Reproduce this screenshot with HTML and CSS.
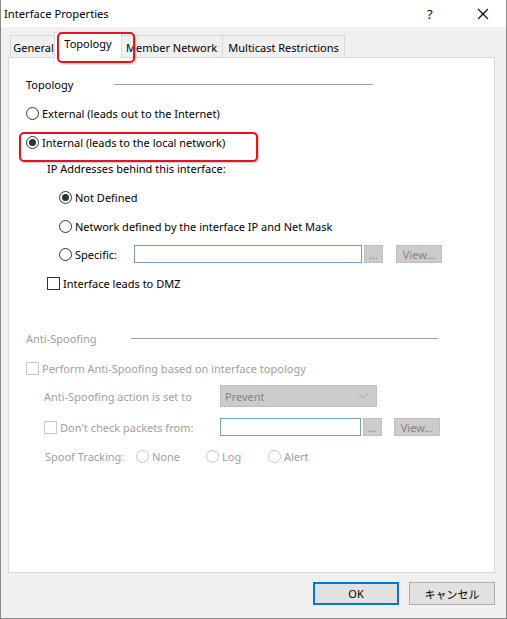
FILE: index.html
```html
<!DOCTYPE html>
<html>
<head>
<meta charset="utf-8">
<link rel="stylesheet" href="styles.css">
</head>
<body>
<div class="window">
  <div class="titlebar">
    <span class="title">Interface Properties</span>
    <span class="help">?</span>
    <svg class="close" width="12" height="12" viewBox="0 0 12 12"><path d="M1 1 L11 11 M11 1 L1 11" stroke="#000" stroke-width="1.1" fill="none"/></svg>
  </div>
  <div class="body">
    <div class="tabs">
      <div class="tab t-general">General</div>
      <div class="tab selected t-topology">Topology</div>
      <div class="tab t-member">Member Network</div>
      <div class="tab t-multi">Multicast Restrictions</div>
      <div class="hl hl-tab"></div>
    </div>
    <div class="panel">
      <div class="group r-topo"><span class="glabel">Topology</span><span class="gline gl-topo"></span></div>
      <div class="row r-ext"><span class="radio"></span><span>External (leads out to the Internet)</span></div>
      <div class="row r-int"><span class="radio checked"></span><span>Internal (leads to the local network)</span></div>
      <div class="row r-ip ind1"><span>IP Addresses behind this interface:</span></div>
      <div class="row r-nd ind2"><span class="radio checked"></span><span>Not Defined</span></div>
      <div class="row r-net ind2"><span class="radio"></span><span>Network defined by the interface IP and Net Mask</span></div>
      <div class="row r-spec ind2"><span class="radio"></span><span class="lbl-spec">Specific:</span><span class="input in-spec"></span><span class="btn-dots">...</span><span class="btn-view">View...</span></div>
      <div class="row r-dmz ind1"><span class="check"></span><span>Interface leads to DMZ</span></div>

      <div class="group r-anti dis"><span class="glabel">Anti-Spoofing</span><span class="gline gl-anti"></span></div>
      <div class="row r-perf dis"><span class="check dis"></span><span>Perform Anti-Spoofing based on interface topology</span></div>
      <div class="row r-act dis ind3"><span class="lbl-act">Anti-Spoofing action is set to</span><span class="select">Prevent<svg class="chev" width="10" height="6" viewBox="0 0 10 6"><path d="M0.5 0.5 L5 5 L9.5 0.5" stroke="#a8a8a8" fill="none"/></svg></span></div>
      <div class="row r-dont dis ind3"><span class="check dis"></span><span class="lbl-dont">Don't check packets from:</span><span class="input in-dont"></span><span class="btn-dots">...</span><span class="btn-view v2">View...</span></div>
      <div class="row r-spoof dis ind4"><span class="lbl-spoof">Spoof Tracking:</span><span class="radio dis"></span><span class="o-none">None</span><span class="radio dis"></span><span class="o-log">Log</span><span class="radio dis"></span><span>Alert</span></div>
      <div class="hl hl-int"></div>
    </div>
    <div class="buttons">
      <button class="btn ok">OK</button>
      <button class="btn">キャンセル</button>
    </div>
  </div>
</div>
</body>
</html>
```
FILE: styles.css
```css
html, body { margin: 0; padding: 0; }
body {
  font-family: "Noto Sans", "Noto Sans CJK JP", sans-serif;
  font-size: 11px;
  color: #000;
  background: #fff;
}
.window {
  width: 505px;
  height: 618px;
  border: 1px solid #8a8a8a;
  border-top: none;
  background: #f0f0f0;
  display: flex;
  flex-direction: column;
}
.titlebar {
  height: 27px;
  background: #fff;
  display: flex;
  align-items: center;
  padding-left: 3px;
  position: relative;
}
.title { flex: 1; font-size: 11.2px; }
.help { width: 16px; margin-right: 34px; font-size: 13px; }
.close { margin-right: 17px; }
.body { flex: 1; display: flex; flex-direction: column; }
.tabs {
  display: flex;
  align-items: flex-end;
  height: 30px;
  margin-left: 9px;
  position: relative;
}
.tab {
  height: 22px;
  border: 1px solid #d9d9d9;
  border-bottom: none;
  border-right: none;
  display: flex;
  align-items: center;
  justify-content: center;
  background: #f0f0f0;
  box-sizing: border-box;
  padding-top: 1px;
}
.t-general { width: 46px; }
.t-topology { width: 68px; }
.t-member { width: 101px; }
.t-multi { width: 123px; border-right: 1px solid #d9d9d9; }
.tab.selected {
  background: #fff;
  height: 26px;
  margin-left: -2px;
  margin-right: -1px;
  margin-bottom: -1px;
  border-right: 1px solid #d9d9d9;
  align-items: flex-start;
  padding-top: 3px;
  position: relative;
  z-index: 2;
}
.tab.selected + .tab { border-left: none; }
.panel {
  margin-left: 7px;
  width: 485px;
  height: 514px;
  background: #fff;
  border: 1px solid #d9d9d9;
  position: relative;
  display: flex;
  flex-direction: column;
}
.row, .group {
  height: 20px;
  display: flex;
  align-items: center;
  padding-left: 17px;
  flex-shrink: 0;
}
.glabel { white-space: nowrap; }
.gline { height: 1px; background: #a0a0a0; }
.gl-topo { margin-left: 41px; width: 259px; }
.gl-anti { margin-left: 35px; width: 307px; }
.ind1 { padding-left: 38px; }
.ind2 { padding-left: 50px; }
.ind3 { padding-left: 35px; }
.ind4 { padding-left: 36px; }
.r-topo { margin-top: 16px; }
.r-ext { margin-top: 9px; }
.r-int { margin-top: 9px; }
.r-ip { margin-top: 6px; }
.r-nd { margin-top: 9px; }
.r-net { margin-top: 9px; }
.r-spec { margin-top: 8px; }
.r-dmz { margin-top: 9px; }
.r-anti { margin-top: 35px; }
.r-perf { margin-top: 10px; }
.r-act { margin-top: 7px; height: 22px; }
.r-dont { margin-top: 10px; }
.r-spoof { margin-top: 9px; }
.dis { color: #a0a0a0; }
.radio {
  width: 11px; height: 11px;
  border: 1px solid #333;
  border-radius: 50%;
  margin-right: 3px;
  position: relative;
  flex-shrink: 0;
  background: #fff;
}
.radio.checked::after {
  content: "";
  position: absolute;
  left: 2px; top: 2px;
  width: 7px; height: 7px;
  border-radius: 50%;
  background: #333;
}
.radio.dis { border-color: #c8c8c8; }
.check {
  width: 11px; height: 11px;
  border: 1px solid #333;
  margin-right: 3px;
  flex-shrink: 0;
}
.check.dis { border-color: #c8c8c8; }
.lbl-spec { width: 59px; }
.input {
  height: 16px;
  border: 1px solid #7a9cb8;
  background: #fff;
  flex-shrink: 0;
}
.in-spec { width: 226px; }
.in-dont { width: 139px; }
.btn-dots {
  width: 17px; height: 16px;
  margin-left: 2px;
  background: #cccccc;
  border: 1px solid #bfbfbf;
  color: #838383;
  font-size: 11px;
  display: flex; align-items: center; justify-content: center;
  flex-shrink: 0;
}
.btn-view {
  width: 44px; height: 16px;
  margin-left: 13px;
  background: #cccccc;
  border: 1px solid #bfbfbf;
  color: #838383;
  display: flex; align-items: center; justify-content: center;
  flex-shrink: 0;
}
.btn-view.v2 { margin-left: 12px; }
.lbl-act { width: 176px; }
.select {
  width: 147px; height: 20px;
  background: #cccccc;
  border: 1px solid #bfbfbf;
  color: #838383;
  display: flex; align-items: center;
  padding-left: 4px;
  padding-right: 4px;
  justify-content: space-between;
}
.chev { margin-right: 4px; }
.lbl-dont { width: 160px; }
.lbl-spoof { width: 91px; }
.o-none { width: 54px; }
.o-log { width: 46px; }
.hl {
  position: absolute;
  border: 2px solid #e5131d;
  border-radius: 5px;
  box-shadow: 1px 1px 2px rgba(0,0,0,0.25);
  z-index: 3;
}
.hl-tab { left: 47px; top: 5px; width: 74px; height: 27px; }
.hl-int { left: 10px; top: 74px; width: 235px; height: 26px; }
.buttons {
  display: flex;
  justify-content: flex-end;
  gap: 10px;
  margin-top: 9px;
  padding-right: 11px;
}
.btn {
  width: 86px; height: 23px;
  background: #e1e1e1;
  border: 1px solid #adadad;
  font-family: "Noto Sans", "Noto Sans CJK JP", sans-serif;
  font-size: 11px;
  color: #000;
  padding: 0;
  box-sizing: border-box;
}
.btn.ok { border: 2px solid #0078d7; }
```
